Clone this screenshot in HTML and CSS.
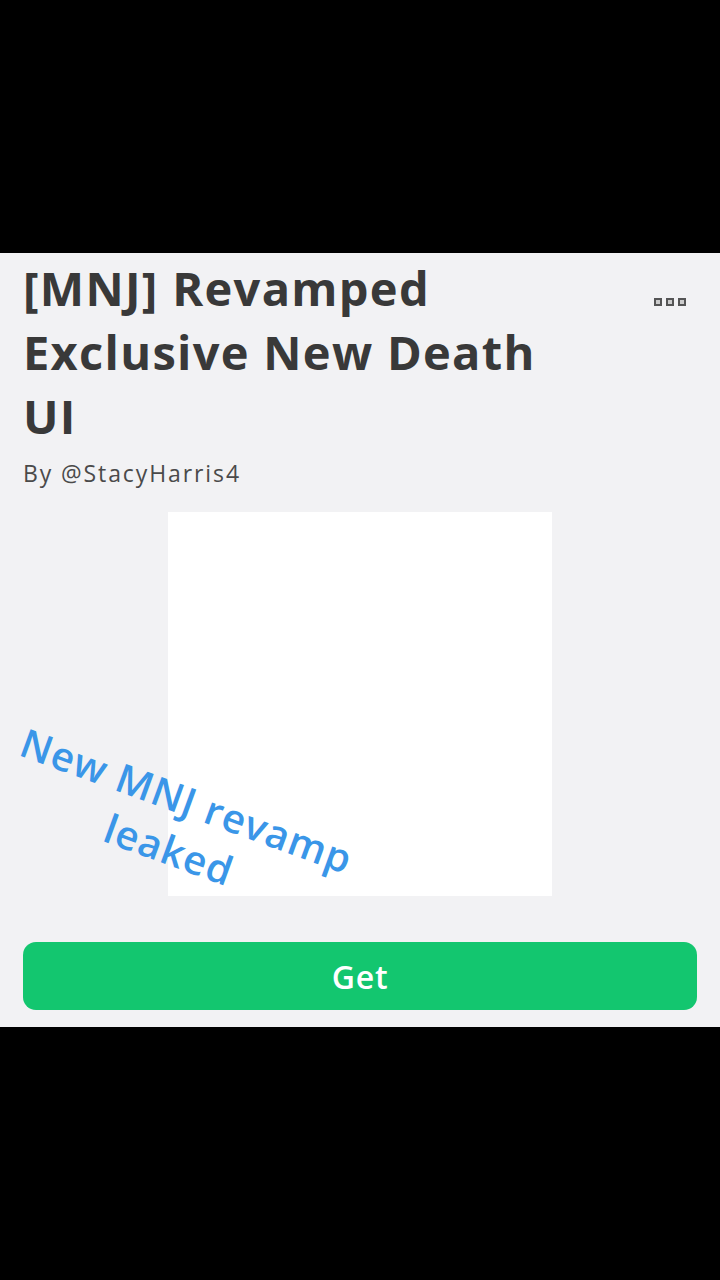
FILE: index.html
```html
<!DOCTYPE html>
<html lang="en">

<head>
    <meta charset="utf-8">
    <meta name="viewport" content="width=device-width, initial-scale=1.0">
    <title>[MNJ] Revamped Exclusive New Death UI</title>
    <link rel="stylesheet" href="styles.css">
</head>

<body>
    <div class="bar"></div>

    <main class="panel">
        <header class="top">
            <h1 class="titel">[MNJ] Revamped Exclusive New Death UI</h1>
            <button class="mere" aria-label="More">
                <span></span><span></span><span></span>
            </button>
        </header>

        <p class="af">By @StacyHarris4</p>

        <div class="billede"></div>

        <button class="hent">Get</button>

        <p class="stempel">New MNJ revamp<br>leaked</p>
    </main>

    <div class="bar bund"></div>
</body>

</html>
```

FILE: styles.css
```css
body {
    margin: 0;
    background-color: #000;
    font-family: 'Open Sans', 'Liberation Sans', sans-serif;
}

.bar {
    height: 253px;
    background-color: #000;
}

.bund {
    height: 253px;
}

.panel {
    position: relative;
    height: 774px;
    background-color: #f2f2f4;
    padding: 3px 23px 0 23px;
    box-sizing: border-box;
    overflow: hidden;
}

.top {
    display: flex;
    justify-content: space-between;
    align-items: flex-start;
}

.titel {
    margin: 0;
    width: 560px;
    font-size: 47px;
    line-height: 64px;
    font-weight: 700;
    color: #393939;
    letter-spacing: 1.3px;
}

.mere {
    display: flex;
    gap: 4px;
    margin: 42px 11px 0 0;
    padding: 0;
    border: none;
    background: none;
}

.mere span {
    width: 4px;
    height: 4px;
    border: 2px solid #555;
    background-color: #ccc;
}

.af {
    margin: 10px 0 0 0;
    font-size: 23px;
    line-height: 30px;
    font-weight: 500;
    color: #4a4a4a;
    letter-spacing: 1.9px;
}

.billede {
    width: 384px;
    height: 384px;
    margin: 24px auto 0 auto;
    background-color: #fff;
}

.hent {
    display: block;
    width: 100%;
    height: 68px;
    margin-top: 46px;
    border: none;
    border-radius: 13px;
    background-color: #13c66f;
    color: #fff;
    font-family: 'Open Sans', 'Liberation Sans', sans-serif;
    font-size: 32px;
    font-weight: 600;
    letter-spacing: 0.8px;
    cursor: pointer;
}

.stempel {
    position: absolute;
    left: 178px;
    top: 572px;
    margin: 0;
    width: 420px;
    transform: translate(-50%, -50%) rotate(20deg);
    text-align: center;
    font-size: 40px;
    line-height: 52px;
    font-weight: 600;
    letter-spacing: 1px;
    color: #3a96e8;
}
```
